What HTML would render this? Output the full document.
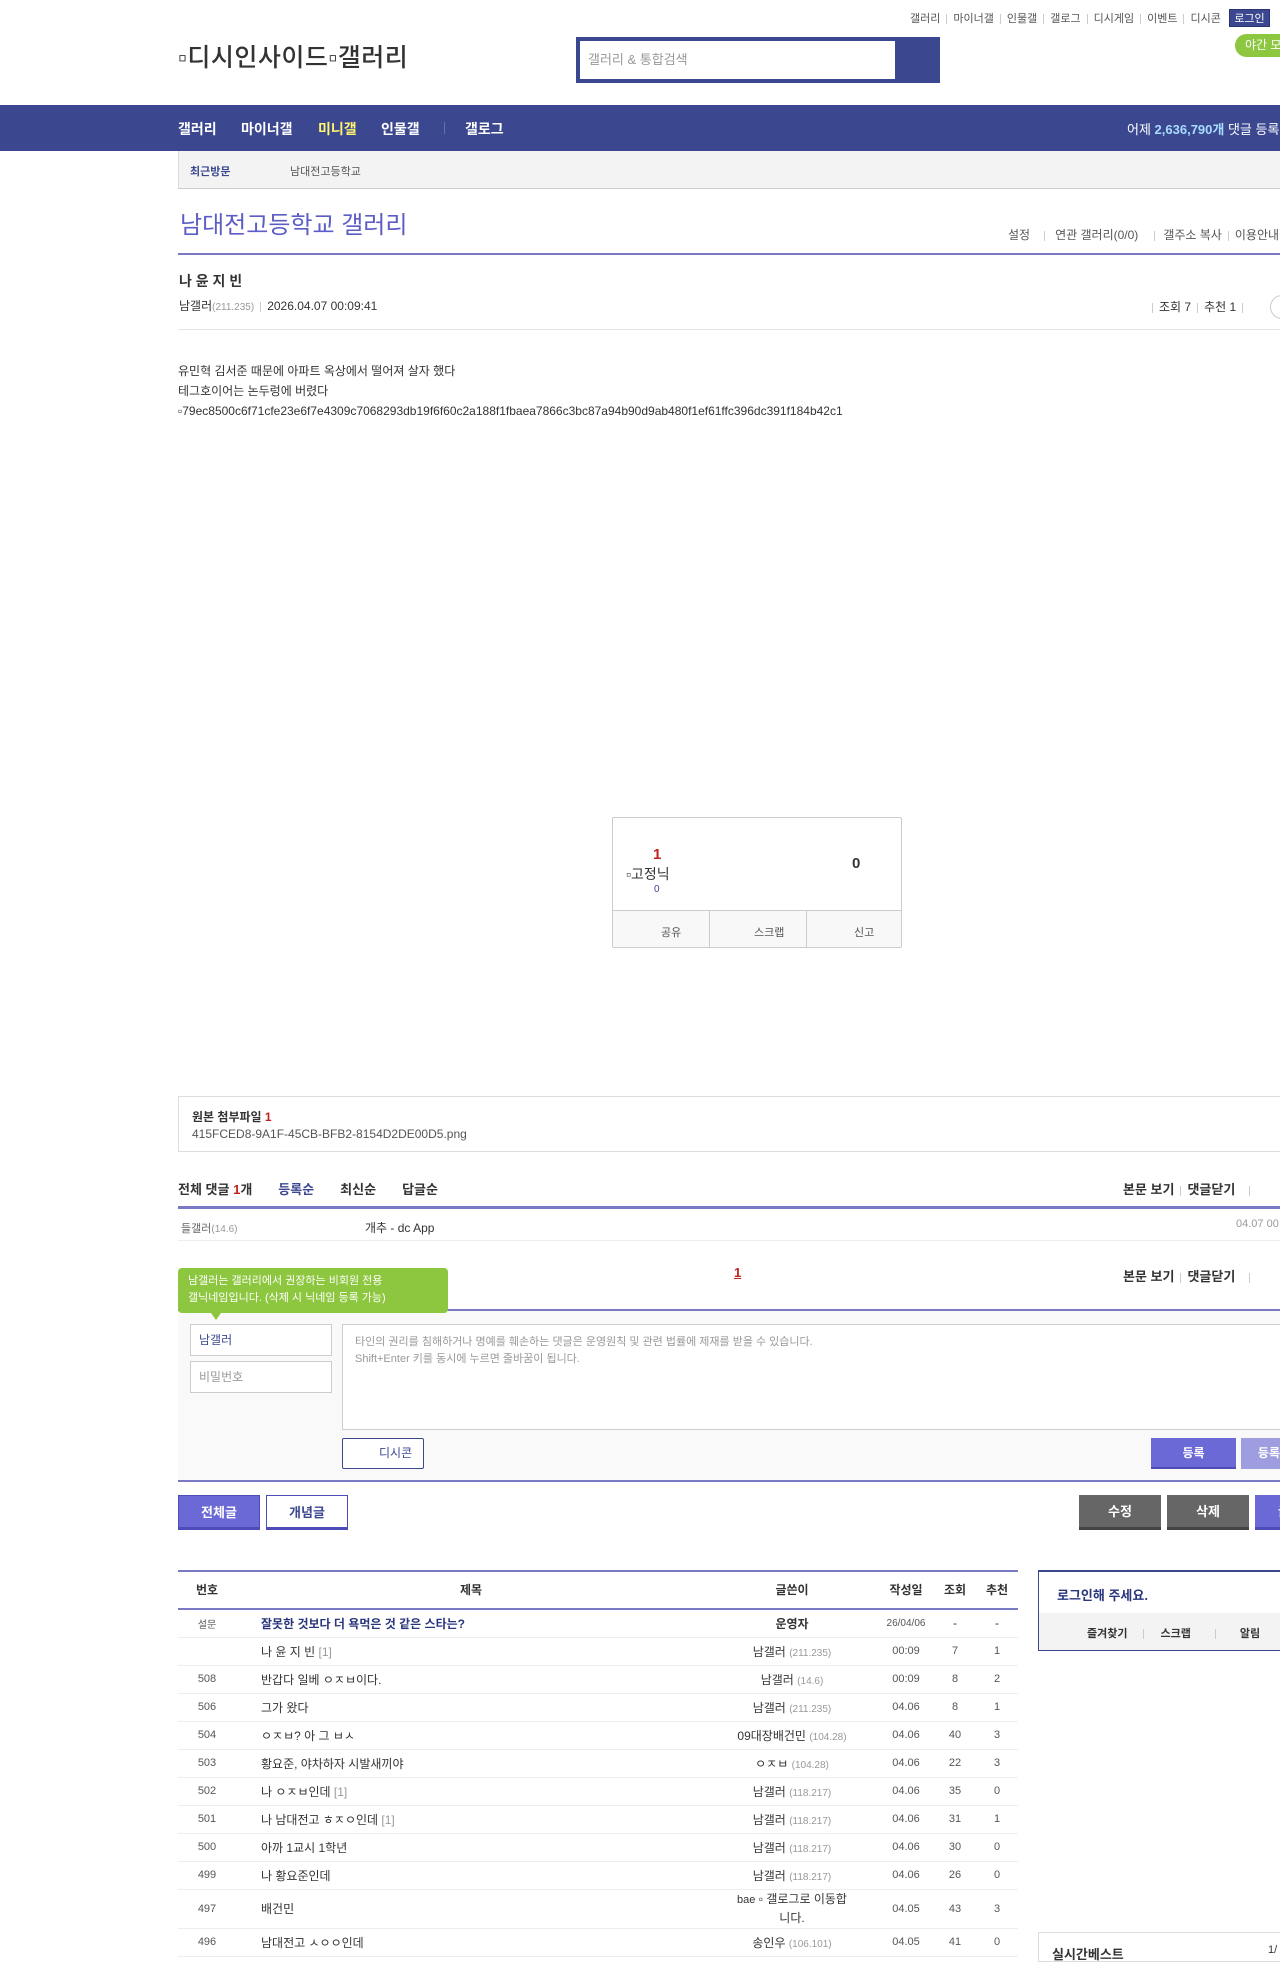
<!DOCTYPE html>
<html><head><meta charset="utf-8"><style>
*{margin:0;padding:0;box-sizing:border-box}
body{width:1280px;height:1956px;overflow:hidden;position:relative;background:#fff;font-family:"Liberation Sans","Noto Sans CJK KR",sans-serif;color:#333;font-size:12px}
.a{position:absolute;white-space:nowrap}
.sep{display:inline-block;width:1px;height:10px;background:#ccc;margin:0 6px;vertical-align:middle}
table{border-collapse:collapse;position:absolute;left:178px;top:1571px;width:840px;table-layout:fixed}
td,th{height:28px;border-bottom:1px solid #eee;font-size:12px;text-align:center;font-weight:normal;color:#333}
th{height:38px;font-weight:bold;border-bottom:2px solid #7a79c5}
td.t{text-align:left;padding-left:25px}
td.n{font-size:11px;color:#555}
.ip{color:#999;font-size:10px}
.btn{position:absolute;height:35px;color:#fff;font-weight:bold;font-size:13px;text-align:center;line-height:33px}
</style></head><body>
<!-- top links -->
<div class="a" style="left:910px;top:10px;font-size:11px;color:#555">갤러리<span class="sep"></span>마이너갤<span class="sep"></span>인물갤<span class="sep"></span>갤로그<span class="sep"></span>디시게임<span class="sep"></span>이벤트<span class="sep"></span>디시콘</div>
<div class="a" style="left:1229px;top:9px;width:41px;height:18px;background:#3b4890;color:#fff;font-size:11px;text-align:center;line-height:18px;border:1px solid #2a3470">로그인</div>
<div class="a" style="left:1235px;top:34px;width:60px;height:23px;background:#8dc63f;border-radius:12px;color:#fff;font-size:12px;line-height:23px;padding-left:10px">야간 모드</div>
<div class="a" style="left:178px;top:38px;font-size:25px;color:#333;font-weight:500;letter-spacing:0.5px">▫디시인사이드▫갤러리</div>
<div class="a" style="left:576px;top:37px;width:364px;height:46px;background:#3b4890"></div>
<div class="a" style="left:580px;top:41px;width:315px;height:38px;background:#fff;color:#999;font-size:13px;line-height:38px;padding-left:8px">갤러리 &amp; 통합검색</div>
<!-- nav -->
<div class="a" style="left:0;top:105px;width:1280px;height:46px;background:#3b4890"></div>
<div class="a" style="left:178px;top:119px;font-size:14px;font-weight:bold;color:#fff">갤러리</div>
<div class="a" style="left:241px;top:119px;font-size:14px;font-weight:bold;color:#fff">마이너갤</div>
<div class="a" style="left:318px;top:119px;font-size:14px;font-weight:bold;color:#fff46c">미니갤</div>
<div class="a" style="left:381px;top:119px;font-size:14px;font-weight:bold;color:#fff">인물갤</div>
<div class="a" style="left:444px;top:122px;width:1px;height:12px;background:#6670a8"></div>
<div class="a" style="left:465px;top:119px;font-size:14px;font-weight:bold;color:#fff">갤로그</div>
<div class="a" style="left:1127px;top:119px;font-size:13px;color:#fff">어제 <b style="color:#a8dcff">2,636,790개</b> 댓글 등록</div>
<!-- recent -->
<div class="a" style="left:178px;top:151px;width:1102px;height:38px;background:#f3f3f3;border-bottom:1px solid #ccc;border-left:1px solid #ddd"></div>
<div class="a" style="left:190px;top:163px;font-size:11px;font-weight:bold;color:#3b4890">최근방문</div>
<div class="a" style="left:290px;top:163px;font-size:11px;color:#555">남대전고등학교</div>
<!-- title -->
<div class="a" style="left:180px;top:205px;font-size:24px;color:#5c5ec6">남대전고등학교 갤러리</div>
<div class="a" style="left:1008px;top:226px;font-size:12px;color:#555">설정<span class="sep" style="margin:0 10px 0 14px"></span>연관 갤러리(0/0)<span class="sep" style="margin:0 8px 0 16px"></span>갤주소 복사<span class="sep"></span>이용안내</div>
<div class="a" style="left:178px;top:253px;width:1102px;height:2px;background:#7a79c5"></div>
<div class="a" style="left:179px;top:271px;font-size:14px;font-weight:bold;color:#333">나 윤 지 빈</div>
<div class="a" style="left:179px;top:297px;font-size:12px;color:#333">남갤러<span class="ip">(211.235)</span><span class="sep"></span>2026.04.07 00:09:41</div>
<div class="a" style="left:1146px;top:298px;font-size:12px;color:#333"><span class="sep"></span>조회 7<span class="sep"></span>추천 1<span class="sep"></span></div>
<div class="a" style="left:1270px;top:295px;width:24px;height:24px;border:1px solid #ccc;border-radius:12px"></div>
<div class="a" style="left:178px;top:329px;width:1102px;height:1px;background:#e5e5e5"></div>
<div class="a" style="left:178px;top:361px;font-size:12px;line-height:20px;color:#333">유민혁 김서준 때문에 아파트 옥상에서 떨어져 살자 했다<br>테그호이어는 논두렁에 버렸다<br>▫79ec8500c6f71cfe23e6f7e4309c7068293db19f6f60c2a188f1fbaea7866c3bc87a94b90d9ab480f1ef61ffc396dc391f184b42c1</div>
<!-- recommend box -->
<div class="a" style="left:612px;top:817px;width:290px;height:131px;border:1px solid #ccc;border-radius:2px"></div>
<div class="a" style="left:613px;top:910px;width:288px;height:37px;background:#f8f8f8;border-top:1px solid #ccc"></div>
<div class="a" style="left:709px;top:911px;width:1px;height:36px;background:#ccc"></div>
<div class="a" style="left:806px;top:911px;width:1px;height:36px;background:#ccc"></div>
<div class="a" style="left:661px;top:924px;font-size:11px;color:#555">공유</div>
<div class="a" style="left:754px;top:924px;font-size:11px;color:#555">스크랩</div>
<div class="a" style="left:854px;top:924px;font-size:11px;color:#555">신고</div>
<div class="a" style="left:653px;top:846px;font-size:15px;font-weight:bold;color:#c1221b">1</div>
<div class="a" style="left:626px;top:864px;font-size:14px;color:#333">▫고정닉</div>
<div class="a" style="left:654px;top:884px;font-size:10px;color:#3b4890">0</div>
<div class="a" style="left:852px;top:855px;font-size:15px;font-weight:bold;color:#333">0</div>
<!-- attachments -->
<div class="a" style="left:178px;top:1096px;width:1110px;height:56px;border:1px solid #ddd"></div>
<div class="a" style="left:192px;top:1108px;font-size:12px;font-weight:bold;color:#333">원본 첨부파일 <span style="color:#c1221b">1</span></div>
<div class="a" style="left:192px;top:1127px;font-size:12px;color:#555">415FCED8-9A1F-45CB-BFB2-8154D2DE00D5.png</div>
<!-- comments -->
<div class="a" style="left:178px;top:1179px;font-size:13px;font-weight:bold;color:#333">전체 댓글 <span style="color:#c1221b">1</span>개<span style="margin-left:26px;color:#3b4890">등록순</span><span style="margin-left:26px">최신순</span><span style="margin-left:26px">답글순</span></div>
<div class="a" style="left:1123px;top:1179px;font-size:13px;font-weight:bold;color:#333">본문 보기<span class="sep"></span>댓글닫기<span class="sep" style="margin-left:14px"></span></div>
<div class="a" style="left:178px;top:1206px;width:1102px;height:3px;background:#7a79c5"></div>
<div class="a" style="left:181px;top:1220px;font-size:11px;color:#666">들갤러<span class="ip">(14.6)</span></div>
<div class="a" style="left:365px;top:1219px;font-size:12px;color:#333">개추 - dc App</div>
<div class="a" style="left:1236px;top:1218px;font-size:11px;color:#999">04.07 00:09</div>
<div class="a" style="left:178px;top:1240px;width:1102px;height:1px;background:#eee"></div>
<div class="a" style="left:734px;top:1265px;font-size:13px;font-weight:bold;color:#c1221b;text-decoration:underline">1</div>
<div class="a" style="left:1123px;top:1266px;font-size:13px;font-weight:bold;color:#333">본문 보기<span class="sep"></span>댓글닫기<span class="sep" style="margin-left:14px"></span></div>
<div class="a" style="left:178px;top:1309px;width:1102px;height:173px;background:#f9f9f9;border-top:2px solid #7a79c5;border-bottom:2px solid #7a79c5"></div>
<div class="a" style="left:178px;top:1268px;width:270px;height:45px;background:#8dc63f;border-radius:4px;color:#fff;font-size:11px;line-height:17px;padding:5px 10px">남갤러는 갤러리에서 권장하는 비회원 전용<br>갤닉네임입니다. (삭제 시 닉네임 등록 가능)</div>
<div class="a" style="left:211px;top:1313px;width:0;height:0;border-left:5px solid transparent;border-right:5px solid transparent;border-top:7px solid #8dc63f"></div>
<div class="a" style="left:190px;top:1324px;width:142px;height:32px;background:#fff;border:1px solid #ccc;font-size:12px;color:#3b4890;line-height:30px;padding-left:8px">남갤러</div>
<div class="a" style="left:190px;top:1361px;width:142px;height:32px;background:#fff;border:1px solid #ccc;font-size:12px;color:#999;line-height:30px;padding-left:8px">비밀번호</div>
<div class="a" style="left:342px;top:1324px;width:950px;height:106px;background:#fff;border:1px solid #ccc;font-size:11px;color:#999;line-height:17px;padding:9px 12px">타인의 권리를 침해하거나 명예를 훼손하는 댓글은 운영원칙 및 관련 법률에 제재를 받을 수 있습니다.<br>Shift+Enter 키를 동시에 누르면 줄바꿈이 됩니다.</div>
<div class="a" style="left:342px;top:1438px;width:82px;height:31px;background:#fff;border:1px solid #3b4890;border-radius:2px;font-size:12px;color:#3b4890;line-height:29px;padding-left:36px">디시콘</div>
<div class="btn" style="left:1151px;top:1438px;width:85px;height:31px;line-height:31px;background:#6b69d6;font-size:12px;border-bottom:2px solid #4e4cb8">등록</div>
<div class="btn" style="left:1241px;top:1438px;width:85px;height:31px;line-height:31px;background:#9e9ddf;font-size:12px">등록+추천</div>
<div class="btn" style="left:178px;top:1495px;width:82px;background:#6b69d6;border:1px solid #4e4cb8;border-bottom:3px solid #4e4cb8">전체글</div>
<div class="btn" style="left:266px;top:1495px;width:82px;background:#fff;color:#3b4890;border:1px solid #4e4cb8;border-bottom:3px solid #4e4cb8">개념글</div>
<div class="btn" style="left:1079px;top:1495px;width:82px;background:#666;border-bottom:3px solid #444">수정</div>
<div class="btn" style="left:1167px;top:1495px;width:82px;background:#666;border-bottom:3px solid #444">삭제</div>
<div class="btn" style="left:1255px;top:1495px;width:82px;background:#6b69d6;border-bottom:3px solid #4e4cb8">글쓰기</div>
<!-- table -->
<div class="a" style="left:178px;top:1570px;width:840px;height:2px;background:#7a79c5"></div>
<table>
<colgroup><col style="width:58px"><col style="width:470px"><col style="width:172px"><col style="width:56px"><col style="width:42px"><col style="width:42px"></colgroup>
<tr><th>번호</th><th>제목</th><th>글쓴이</th><th>작성일</th><th>조회</th><th>추천</th></tr>
<tr><td class="n" style="font-size:10px">설문</td><td class="t" style="font-weight:bold;color:#29367c">잘못한 것보다 더 욕먹은 것 같은 스타는?</td><td style="font-weight:bold">운영자</td><td class="n" style="font-size:10px">26/04/06</td><td>-</td><td>-</td></tr>
<tr><td></td><td class="t">나 윤 지 빈 <span style="color:#999">[1]</span></td><td>남갤러 <span class="ip">(211.235)</span></td><td class="n">00:09</td><td class="n">7</td><td class="n">1</td></tr>
<tr><td class="n">508</td><td class="t">반갑다 일베 ㅇㅈㅂ이다.</td><td>남갤러 <span class="ip">(14.6)</span></td><td class="n">00:09</td><td class="n">8</td><td class="n">2</td></tr>
<tr><td class="n">506</td><td class="t">그가 왔다</td><td>남갤러 <span class="ip">(211.235)</span></td><td class="n">04.06</td><td class="n">8</td><td class="n">1</td></tr>
<tr><td class="n">504</td><td class="t">ㅇㅈㅂ? 아 그 ㅂㅅ</td><td>09대장배건민 <span class="ip">(104.28)</span></td><td class="n">04.06</td><td class="n">40</td><td class="n">3</td></tr>
<tr><td class="n">503</td><td class="t">황요준, 야차하자 시발새끼야</td><td>ㅇㅈㅂ <span class="ip">(104.28)</span></td><td class="n">04.06</td><td class="n">22</td><td class="n">3</td></tr>
<tr><td class="n">502</td><td class="t">나 ㅇㅈㅂ인데 <span style="color:#999">[1]</span></td><td>남갤러 <span class="ip">(118.217)</span></td><td class="n">04.06</td><td class="n">35</td><td class="n">0</td></tr>
<tr><td class="n">501</td><td class="t">나 남대전고 ㅎㅈㅇ인데 <span style="color:#999">[1]</span></td><td>남갤러 <span class="ip">(118.217)</span></td><td class="n">04.06</td><td class="n">31</td><td class="n">1</td></tr>
<tr><td class="n">500</td><td class="t">아까 1교시 1학년</td><td>남갤러 <span class="ip">(118.217)</span></td><td class="n">04.06</td><td class="n">30</td><td class="n">0</td></tr>
<tr><td class="n">499</td><td class="t">나 황요준인데</td><td>남갤러 <span class="ip">(118.217)</span></td><td class="n">04.06</td><td class="n">26</td><td class="n">0</td></tr>
<tr><td class="n" style="height:39px">497</td><td class="t">배건민</td><td style="line-height:18px"><span style="font-size:11px">bae</span> ▫ 갤로그로 이동합<br>니다.</td><td class="n">04.05</td><td class="n">43</td><td class="n">3</td></tr>
<tr><td class="n">496</td><td class="t">남대전고 ㅅㅇㅇ인데</td><td>송인우 <span class="ip">(106.101)</span></td><td class="n">04.05</td><td class="n">41</td><td class="n">0</td></tr>
</table>
<!-- right box -->
<div class="a" style="left:1038px;top:1570px;width:260px;height:81px;border:1px solid #3b4890;border-top:2px solid #3b4890"></div>
<div class="a" style="left:1057px;top:1585px;font-size:13px;font-weight:bold;color:#29367c">로그인해 주세요.</div>
<div class="a" style="left:1039px;top:1613px;width:250px;height:37px;background:#f3f3f3"></div>
<div class="a" style="left:1087px;top:1625px;font-size:11px;font-weight:bold;color:#333">즐겨찾기<span class="sep" style="margin:0 16px"></span>스크랩<span class="sep" style="margin:0 24px"></span>알림</div>
<div class="a" style="left:1038px;top:1932px;width:260px;height:30px;border:1px solid #ddd"></div>
<div class="a" style="left:1052px;top:1944px;font-size:13px;font-weight:bold;color:#333">실시간베스트</div>
<div class="a" style="left:1268px;top:1944px;font-size:11px;color:#333">1/</div>
</body></html>
